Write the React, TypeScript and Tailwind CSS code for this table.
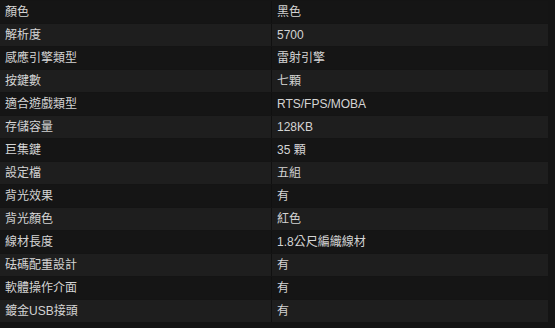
import React from "react";

const rows: [string, string][] = [
  ["顏色", "黑色"],
  ["解析度", "5700"],
  ["感應引擎類型", "雷射引擎"],
  ["按鍵數", "七顆"],
  ["適合遊戲類型", "RTS/FPS/MOBA"],
  ["存儲容量", "128KB"],
  ["巨集鍵", "35 顆"],
  ["設定檔", "五組"],
  ["背光效果", "有"],
  ["背光顏色", "紅色"],
  ["線材長度", "1.8公尺編織線材"],
  ["砝碼配重設計", "有"],
  ["軟體操作介面", "有"],
  ["鍍金USB接頭", "有"],
];

export default function App() {
  return (
    <div
      className="w-[555px] h-[328px] bg-[#141414] overflow-hidden pt-[1px]"
      style={{ fontFamily: '"Liberation Sans", "Noto Sans CJK TC", sans-serif' }}
    >
      <div className="w-[548px] flex flex-col gap-[1px]">
        {rows.map(([k, v], i) => (
          <div
            key={k}
            className={`flex h-[22px] items-center text-[12px] leading-[22px] text-[#d4d4d4] ${
              i % 2 === 1 ? "bg-[#1e1e1e]" : "bg-[#151515]"
            }`}
          >
            <div className="w-[272px] h-full pl-[5px] border-r border-[#101010] shrink-0">{k}</div>
            <div className="flex-1 h-full pl-[5px]">{v}</div>
          </div>
        ))}
      </div>
    </div>
  );
}
